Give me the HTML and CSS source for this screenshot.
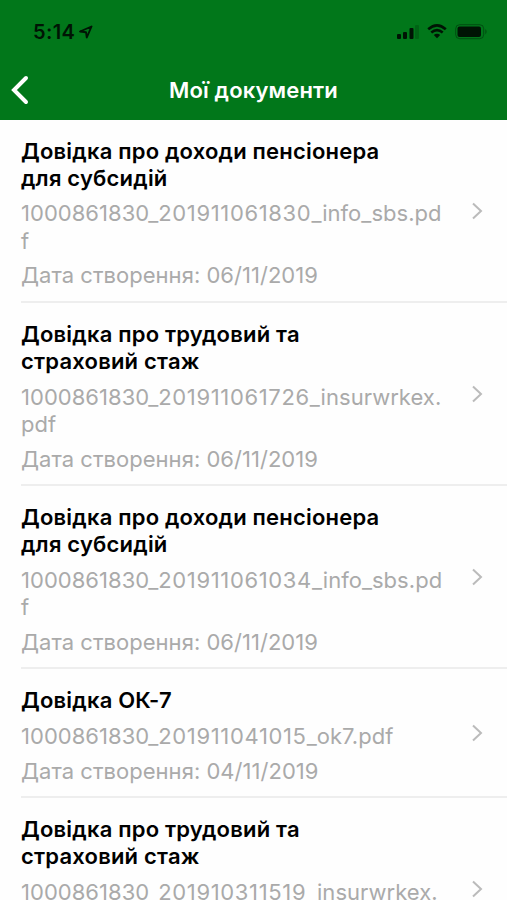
FILE: index.html
```
<!DOCTYPE html>
<html lang="uk">

<head>
  <meta charset="utf-8">
  <meta name="viewport" content="width=device-width, initial-scale=1.0">
  <title>Мої документи</title>
  <link rel="stylesheet" href="styles.css">
</head>

<body>
  <header>
    <div class="status">
      <span class="time">5:14</span>
      <svg class="location" width="14" height="14" viewBox="0 0 14 14"><path d="M1 6.5L12.5 1.5L7.8 12.5L7 7.2Z" fill="none" stroke="#001404" stroke-width="1.9" stroke-linejoin="round"/></svg>
      <svg class="signal" width="22" height="14" viewBox="0 0 22 14">
        <rect x="0" y="9" width="4" height="5" rx="1"/>
        <rect x="6" y="7" width="4" height="7" rx="1"/>
        <rect x="12.5" y="3" width="4" height="11" rx="1"/>
        <rect x="18" y="0" width="4" height="14" rx="1" opacity=".2"/>
      </svg>
      <svg class="wifi" width="20" height="15" viewBox="0 0 20 15">
        <path d="M1.2 5.3Q10 -2.5 18.8 5.3M4.3 8.6Q10 3.8 15.7 8.6" fill="none" stroke="#001404" stroke-width="2.6"/>
        <path d="M6.8 11Q10 8.6 13.2 11L10 14.3Z"/>
      </svg>
      <svg class="battery" width="33" height="16" viewBox="0 0 33 16">
        <rect x=".7" y=".7" width="28" height="14" rx="4" fill="none" stroke="#001404" opacity=".4"/>
        <rect x="2.5" y="2.5" width="23.5" height="10.5" rx="2"/>
        <path d="M30.3 5Q33 7.7 30.3 10.5Z" opacity=".4"/>
      </svg>
    </div>
    <div class="nav">
      <svg class="back" width="20" height="30" viewBox="0 0 20 30"><path d="M16 3L4 15L16 27" fill="none" stroke="#fff" stroke-width="4" stroke-linecap="round"/></svg>
      <h1>Мої документи</h1>
    </div>
  </header>

  <div class="list">
    <div class="item">
      <h2>Довідка про доходи пенсіонера<br>для субсидій</h2>
      <p>1000861830_<b>201911061830</b>_info_sbs.pd<br>f</p>
      <p class="date">Дата створення: 06/11/2019</p>
      <svg class="arrow" width="12" height="18" viewBox="0 0 12 18"><path d="M2 1.5L10 9L2 16.5"/></svg>
    </div>
    <div class="item">
      <h2>Довідка про трудовий та<br>страховий стаж</h2>
      <p>1000861830_<b>201911061726</b>_insurwrkex.<br>pdf</p>
      <p class="date">Дата створення: 06/11/2019</p>
      <svg class="arrow" width="12" height="18" viewBox="0 0 12 18"><path d="M2 1.5L10 9L2 16.5"/></svg>
    </div>
    <div class="item">
      <h2>Довідка про доходи пенсіонера<br>для субсидій</h2>
      <p>1000861830_<b>201911061034</b>_info_sbs.pd<br>f</p>
      <p class="date">Дата створення: 06/11/2019</p>
      <svg class="arrow" width="12" height="18" viewBox="0 0 12 18"><path d="M2 1.5L10 9L2 16.5"/></svg>
    </div>
    <div class="item">
      <h2>Довідка ОК-7</h2>
      <p>1000861830_<b>201911041015</b>_ok7.pdf</p>
      <p class="date">Дата створення: 04/11/2019</p>
      <svg class="arrow" width="12" height="18" viewBox="0 0 12 18"><path d="M2 1.5L10 9L2 16.5"/></svg>
    </div>
    <div class="item">
      <h2>Довідка про трудовий та<br>страховий стаж</h2>
      <p>1000861830_<b>201910311519</b>_insurwrkex.<br>pdf</p>
      <p class="date">Дата створення: 31/10/2019</p>
      <svg class="arrow" width="12" height="18" viewBox="0 0 12 18"><path d="M2 1.5L10 9L2 16.5"/></svg>
    </div>
  </div>
</body>

</html>
```

FILE: styles.css
```
* {
  box-sizing: border-box;
  margin: 0;
  padding: 0;
}

body {
  height: 900px;
  overflow: hidden;
  background: #fefefe;
  font-family: Inter, "Liberation Sans", sans-serif;
}

header {
  height: 119.5px;
  background: #01771a;
}

.status {
  display: flex;
  align-items: center;
  height: 63px;
  padding: 0 19px 0 33px;
  fill: #001404;
}

.time {
  color: #001404;
  font-size: 20px;
  font-weight: 600;
  letter-spacing: .4px;
}

.location {
  margin-left: 4px;
}

.signal {
  margin-left: auto;
}

.wifi {
  margin: 0 8px;
}

.nav {
  display: flex;
  align-items: center;
  height: 54px;
  padding: 0 10px;
}

h1 {
  flex: 1;
  padding-right: 20px;
  color: #fff;
  font-size: 22px;
  font-weight: 600;
  letter-spacing: .15px;
  text-align: center;
}

.item {
  display: grid;
  grid-template-columns: 1fr 12px;
  margin-left: 21px;
  padding: 18px 24px 11.2px 0;
  border-bottom: 2px solid #eee;
  white-space: nowrap;
}

h2,
p {
  grid-column: 1;
  font-size: 22px;
  line-height: 27.2px;
}

h2 {
  color: #000;
  font-weight: 600;
  letter-spacing: .2px;
}

p {
  margin-top: 8.5px;
  color: #aaa;
  letter-spacing: .03px;
}

/* date stamp inside the file name */
p b {
  font-weight: normal;
  letter-spacing: .65px;
}

.date {
  margin-top: 7.6px;
}

.arrow {
  grid-column: 2;
  grid-row: 1 / 4;
  align-self: center;
  margin-bottom: 6px;
  fill: none;
  stroke: #bbb;
  stroke-width: 2;
}
```
